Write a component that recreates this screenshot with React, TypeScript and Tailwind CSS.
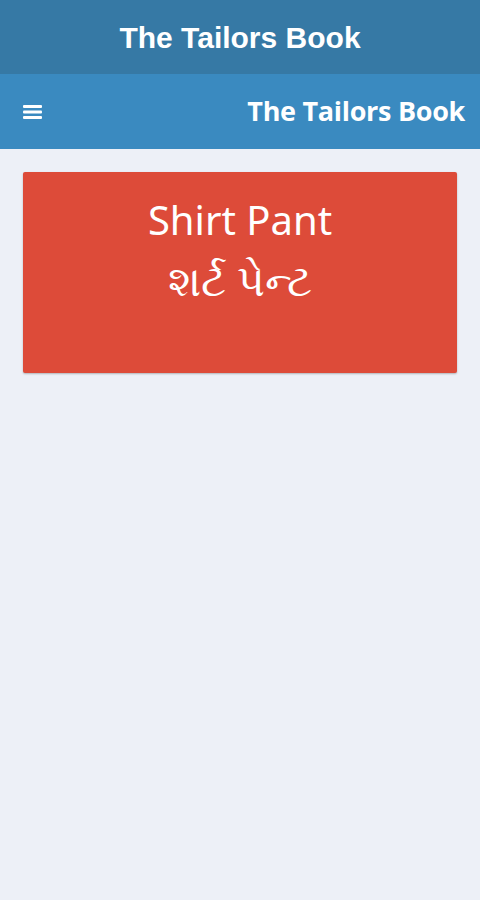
export default function App() {
  return (
    <div className="flex min-h-[900px] w-full flex-col bg-[#edf0f7]">
      {/* App title bar */}
      <div className="flex h-[74px] items-center justify-center bg-[#3679a5]">
        <h1
          className="text-[30px] font-bold text-white"
          style={{ fontFamily: '"Liberation Sans", Arial, sans-serif' }}
        >
          The Tailors Book
        </h1>
      </div>

      {/* Nav bar */}
      <div
        className="flex h-[75px] items-center justify-between bg-[#3a8ac0] pl-[23px] pr-[15px]"
        style={{ fontFamily: '"Open Sans", Lato, sans-serif' }}
      >
        <svg width="19" height="16" viewBox="0 0 19 16" aria-hidden="true">
          <rect x="0" y="1" width="19" height="3" rx="1" fill="#fff" />
          <rect x="0" y="6.5" width="19" height="3" rx="1" fill="#fff" />
          <rect x="0" y="12" width="19" height="3" rx="1" fill="#fff" />
        </svg>
        <span className="text-[27px] font-bold tracking-[-0.3px] text-white">The Tailors Book</span>
      </div>

      {/* Category card */}
      <div className="px-[23px] pt-[23px]">
        <div
          className="flex h-[201px] flex-col items-center rounded-[2px] bg-[#dd4b39] pt-[24px] text-white shadow-[0_1px_2px_rgba(0,0,0,0.25)]"
          style={{ fontFamily: '"Noto Sans", "Open Sans", sans-serif' }}
        >
          <span className="text-[40px] leading-[48px]">Shirt Pant</span>
          <span className="mt-[5px] text-[43px] leading-[62px]">શર્ટ પેન્ટ</span>
        </div>
      </div>
    </div>
  );
}
